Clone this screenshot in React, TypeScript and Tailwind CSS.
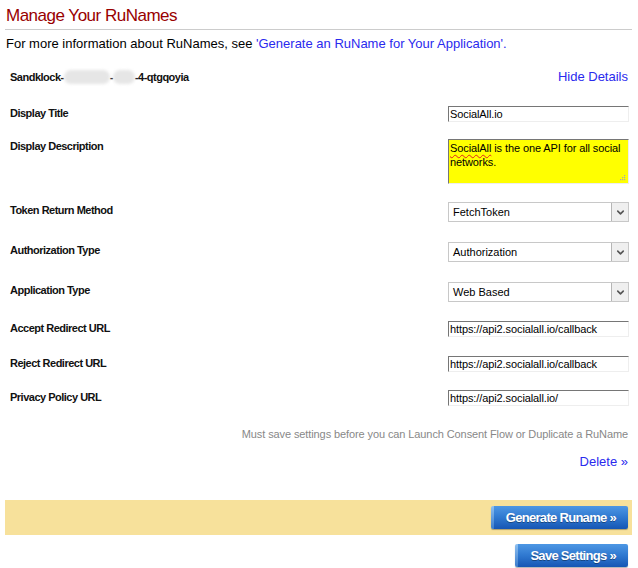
import { ChevronDown } from "lucide-react";

const labelCls = "w-[443px] pl-[5px] text-[11px] font-bold text-[#111] leading-[13px] tracking-[-0.5px]";
const inputCls =
  "w-[181px] h-[16px] text-[11px] leading-[14px] pl-[1px] text-black bg-white border border-t-[#767676] border-l-[#767676] border-r-[#eee] border-b-[#eee] flex items-center tracking-[-0.1px]";

function Select({ value }: { value: string }) {
  return (
    <div className="w-[181px] h-[20px] -mt-[1px] border border-[#c8c8c8] flex items-stretch bg-white">
      <div className="flex-1 text-[11px] pl-[4px] flex items-center text-black">{value}</div>
      <div className="w-[17px] bg-[#efefef] border-l border-[#b5b5b5] flex items-center justify-center">
        <ChevronDown size={11} strokeWidth={3.5} className="text-[#555]" />
      </div>
    </div>
  );
}

function Row({ label, h, children }: { label: string; h: string; children: React.ReactNode }) {
  return (
    <div className={`flex items-start ${h}`}>
      <div className={`${labelCls} pt-[1px]`}>{label}</div>
      {children}
    </div>
  );
}

function BlueButton({ children }: { children: React.ReactNode }) {
  return (
    <div className="h-[23px] flex items-stretch rounded-[2px] overflow-hidden shadow-[0_1px_1px_rgba(0,0,0,0.3)]">
      <div className="w-[3px] bg-gradient-to-b from-[#8ec0f0] to-[#3a7ccc]" />
      <div className="px-[12px] bg-gradient-to-b from-[#4d97e4] via-[#2f78d0] to-[#1656b4] text-white font-bold text-[13px] flex items-center [text-shadow:0_1px_0_rgba(0,0,0,0.35)] tracking-[-0.7px]">
        {children}
      </div>
    </div>
  );
}

export default function App() {
  return (
    <div className="w-[638px] h-[568px] bg-white overflow-hidden font-['Liberation_Sans',Arial,sans-serif]">
      <div className="pl-[5px] pr-[6px]">
        <h1 className="text-[17px] tracking-[-0.5px] leading-[22px] text-[#990000] pt-[5px] pl-[1px] pb-[2px] border-b border-[#cccccc]">
          Manage Your RuNames
        </h1>
        <p className="text-[13px] leading-[16px] text-black pl-[1px] mt-[6px]">
          For more information about RuNames, see{" "}
          <span className="text-[#2a2aee]">'Generate an RuName for Your Application'.</span>
        </p>

        {/* RuName header row */}
        <div className="flex items-center justify-between pr-[4px] mt-[17px] h-[16px]">
          <div className="pl-[5px] text-[11px] font-bold text-[#111] flex items-center tracking-[-0.5px]">
            Sandklock-
            <span className="inline-block w-[46px] h-[14px] rounded-full bg-[#e6e6e6] blur-[1.5px]" />
            -
            <span className="inline-block w-[22px] h-[14px] rounded-full bg-[#e6e6e6] blur-[1.5px]" />
            -4-qtgqoyia
          </div>
          <span className="text-[13px] text-[#2a2aee]">Hide Details</span>
        </div>

        <div className="mt-[21px]">
          <Row label="Display Title" h="h-[33px]">
            <div className={inputCls}>SocialAll.io</div>
          </Row>
          <Row label="Display Description" h="h-[64px]">
            <div className="w-[181px] h-[45px] relative text-[11px] leading-[14px] pl-[1px] pt-[1px] text-black bg-[#ffff00] border border-t-[#767676] border-l-[#767676] border-r-[#eee] border-b-[#eee] tracking-[-0.1px]">
              <span className="underline decoration-wavy decoration-[#e02020] decoration-1 underline-offset-2">SocialAll</span> is
              the one API for all social networks.
              <svg className="absolute right-[2px] bottom-[2px]" width="7" height="7" viewBox="0 0 7 7">
                <rect x="5" y="1" width="1.2" height="1.2" fill="#aaa" />
                <rect x="3" y="3" width="1.2" height="1.2" fill="#aaa" />
                <rect x="5" y="3" width="1.2" height="1.2" fill="#aaa" />
                <rect x="1" y="5" width="1.2" height="1.2" fill="#aaa" />
                <rect x="3" y="5" width="1.2" height="1.2" fill="#aaa" />
                <rect x="5" y="5" width="1.2" height="1.2" fill="#aaa" />
              </svg>
            </div>
          </Row>
          <Row label="Token Return Method" h="h-[40px]">
            <Select value="FetchToken" />
          </Row>
          <Row label="Authorization Type" h="h-[40px]">
            <Select value="Authorization" />
          </Row>
          <Row label="Application Type" h="h-[38px]">
            <Select value="Web Based" />
          </Row>
          <Row label="Accept Redirect URL" h="h-[35px]">
            <div className={inputCls}>https://api2.socialall.io/callback</div>
          </Row>
          <Row label="Reject Redirect URL" h="h-[34px]">
            <div className={inputCls}>https://api2.socialall.io/callback</div>
          </Row>
          <Row label="Privacy Policy URL" h="h-[16px]">
            <div className={inputCls}>https://api2.socialall.io/</div>
          </Row>
        </div>

        <div className="text-right pr-[4px] mt-[21px] text-[11px] leading-[14px] text-[#888] tracking-[-0.1px]">
          Must save settings before you can Launch Consent Flow or Duplicate a RuName
        </div>
        <div className="text-right pr-[4px] mt-[13px] text-[13px] leading-[16px] text-[#2a2aee]">Delete »</div>

        <div className="mt-[30px] h-[35px] bg-[#f7e19b] flex items-center justify-end pr-[4px]">
          <BlueButton>Generate Runame »</BlueButton>
        </div>
        <div className="mt-[9px] flex justify-end pr-[4px]">
          <BlueButton>Save Settings »</BlueButton>
        </div>
      </div>
    </div>
  );
}
